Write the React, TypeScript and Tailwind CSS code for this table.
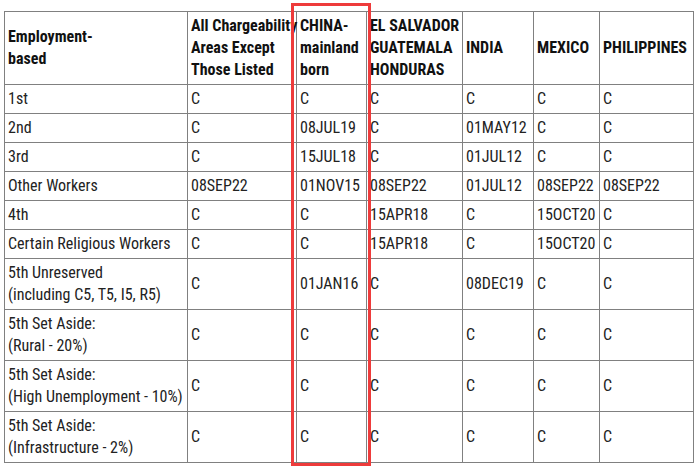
import React from 'react';

type Row = { label: string[]; cells: string[] };

const headers: string[][] = [
  ['Employment-', 'based'],
  ['All Chargeability', 'Areas Except', 'Those Listed'],
  ['CHINA-', 'mainland', 'born'],
  ['EL SALVADOR', 'GUATEMALA', 'HONDURAS'],
  ['INDIA'],
  ['MEXICO'],
  ['PHILIPPINES'],
];

const colWidths = ['w-[183px]', 'w-[109px]', 'w-[70px]', 'w-[96px]', 'w-[71px]', 'w-[66px]', 'w-[94px]'];

const rows: Row[] = [
  { label: ['1st'], cells: ['C', 'C', 'C', 'C', 'C', 'C'] },
  { label: ['2nd'], cells: ['C', '08JUL19', 'C', '01MAY12', 'C', 'C'] },
  { label: ['3rd'], cells: ['C', '15JUL18', 'C', '01JUL12', 'C', 'C'] },
  { label: ['Other Workers'], cells: ['08SEP22', '01NOV15', '08SEP22', '01JUL12', '08SEP22', '08SEP22'] },
  { label: ['4th'], cells: ['C', 'C', '15APR18', 'C', '15OCT20', 'C'] },
  { label: ['Certain Religious Workers'], cells: ['C', 'C', '15APR18', 'C', '15OCT20', 'C'] },
  { label: ['5th Unreserved', '(including C5, T5, I5, R5)'], cells: ['C', '01JAN16', 'C', '08DEC19', 'C', 'C'] },
  { label: ['5th Set Aside:', '(Rural - 20%)'], cells: ['C', 'C', 'C', 'C', 'C', 'C'] },
  { label: ['5th Set Aside:', '(High Unemployment - 10%)'], cells: ['C', 'C', 'C', 'C', 'C', 'C'] },
  { label: ['5th Set Aside:', '(Infrastructure - 2%)'], cells: ['C', 'C', 'C', 'C', 'C', 'C'] },
];

const cell = 'border border-[#808080] px-[3px] py-0 align-middle text-left whitespace-nowrap';

export default function App() {
  return (
    <div className="relative w-[699px] h-[471px] bg-white pl-[4px] pt-[11px] font-['Roboto',sans-serif] [font-stretch:75%] text-[16px] leading-[22px] text-[#222]">
      <table className="table-fixed border-collapse w-[690px]">
        <colgroup>
          {colWidths.map((w, i) => (
            <col key={i} className={w} />
          ))}
        </colgroup>
        <thead>
          <tr className="h-[73px]">
            {headers.map((h, i) => (
              <th key={i} className={`${cell} font-bold text-[#111]`}>
                {h.map((line, j) => (
                  <div key={j}>{line}</div>
                ))}
              </th>
            ))}
          </tr>
        </thead>
        <tbody>
          {rows.map((r, i) => (
            <tr key={i} className={r.label.length > 1 ? 'h-[51px]' : 'h-[29px]'}>
              <td className={cell}>
                {r.label.map((line, j) => (
                  <div key={j}>{line}</div>
                ))}
              </td>
              {r.cells.map((c, j) => (
                <td key={j} className={cell}>
                  {c}
                </td>
              ))}
            </tr>
          ))}
        </tbody>
      </table>
      {/* highlight box around the China column */}
      <div className="absolute left-[291px] top-[3px] w-[80px] h-[463px] border-[3px] border-[#ee3b3b] pointer-events-none" />
    </div>
  );
}
